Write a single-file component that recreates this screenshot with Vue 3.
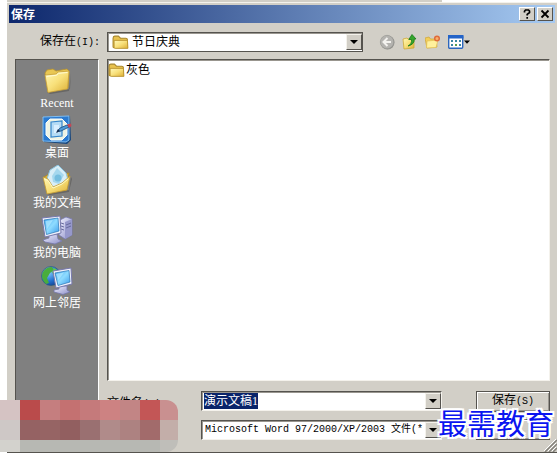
<script setup>
import { onMounted, ref } from 'vue'

const places = [
  { id: 'recent', label: 'Recent' },
  { id: 'desktop', label: '桌面' },
  { id: 'documents', label: '我的文档' },
  { id: 'computer', label: '我的电脑' },
  { id: 'network', label: '网上邻居' },
]
const files = ['灰色']
const fileName = ref('演示文稿1')
const nameInput = ref(null)

const mosaic = [
  ['#d5c3c3', '#ba4b4b', '#c57e7f', '#c47171', '#c57a7b', '#cd8282', '#c28585', '#c35656', '#c99090'],
  ['#cec8c6', '#956263', '#966464', '#925f60', '#9a7071', '#b08b8a', '#ad8281', '#a26b6b', '#c3aea9'],
  ['#d3d2cd', '#b7b8b3', '#b7b8b3', '#b7b8b3', '#b7b8b3', '#b7b8b3', '#b7b8b3', '#b7b8b3', '#bfbeb9'],
]

onMounted(() => {
  nameInput.value.focus()
  nameInput.value.select()
})
</script>

<template>
  <div class="page">
    <svg width="0" height="0" class="defs" aria-hidden="true">
      <defs>
        <linearGradient id="gold" x1="0" y1="0" x2="1" y2="1">
          <stop offset="0" stop-color="#fff8b8" />
          <stop offset="0.5" stop-color="#f8e07a" />
          <stop offset="1" stop-color="#dcae34" />
        </linearGradient>
        <linearGradient id="screen" x1="0" y1="0" x2="1" y2="1">
          <stop offset="0" stop-color="#3fa2f0" />
          <stop offset="0.5" stop-color="#8fdcff" />
          <stop offset="1" stop-color="#3a9bea" />
        </linearGradient>
        <linearGradient id="shell" x1="0" y1="0" x2="1" y2="1">
          <stop offset="0" stop-color="#f0f1ff" />
          <stop offset="1" stop-color="#8d8fc8" />
        </linearGradient>
        <radialGradient id="globe" cx="0.35" cy="0.3" r="0.8">
          <stop offset="0" stop-color="#8ed2ff" />
          <stop offset="0.6" stop-color="#2271cf" />
          <stop offset="1" stop-color="#123e8c" />
        </radialGradient>
        <symbol id="folder" viewBox="0 0 16 14">
          <path d="M1 3Q1 1 2.500 1H6L8 3H13Q14.500 3 14.500 4.500V12H2Q1 12 1 11Z" fill="#e8c24e" stroke="#a8862a" stroke-width="1" />
          <path d="M2 5H14.500L15 12.500H3Q2 12.500 2 11.500Z" fill="url(#gold)" stroke="#b8922e" stroke-width=".8" />
        </symbol>
      </defs>
    </svg>

    <div class="backdrop"><span></span></div>

    <main class="dialog">
      <header class="titlebar">
        <h1>保存</h1>
        <button type="button" class="caption" aria-label="帮助">
          <svg width="10" height="10" viewBox="0 0 10 10"><path d="M2.500 3.500V2.200L3.500 1H6.500L7.500 2V3.500L5.200 5.300V6.500M5.200 8V9.800" fill="none" stroke="#000" stroke-width="1.700" /></svg>
        </button>
        <button type="button" class="caption" aria-label="关闭">
          <svg width="10" height="10" viewBox="0 0 10 10"><path d="M1.500 1.500L8.500 8.500M8.500 1.500L1.500 8.500" stroke="#000" stroke-width="1.800" /></svg>
        </button>
      </header>

      <div class="lookin">
        <label for="location">保存在<span class="mono">(I):</span></label>
        <div class="combo location">
          <svg class="lead" width="17" height="15"><use href="#folder" /></svg>
          <select id="location"><option>节日庆典</option></select>
          <span class="arrow" aria-hidden="true"></span>
        </div>
        <nav class="tools" aria-label="工具">
          <button type="button" aria-label="后退">
            <svg width="16" height="16" viewBox="0 0 16 16">
              <circle cx="8.500" cy="8.500" r="7" fill="#8f8f8b" />
              <circle cx="8" cy="8" r="6.700" fill="#b4b3af" stroke="#999994" stroke-width=".6" />
              <path d="M8.500 4L4.500 8L8.500 12M5 8H12" fill="none" stroke="#f3f2ee" stroke-width="2" />
            </svg>
          </button>
          <button type="button" aria-label="向上一级">
            <svg width="16" height="16" viewBox="0 0 16 16">
              <path d="M1 5L5 4L6 5L12 4V14L2 15Z" fill="url(#gold)" stroke="#cda83a" stroke-width=".8" />
              <path d="M6 12Q10 10 9.500 5.500H6.800L10 .5L14 5H12.300Q12.500 10.500 6 12Z" fill="#35a72d" stroke="#167b1b" stroke-width=".8" />
            </svg>
          </button>
          <button type="button" aria-label="新建文件夹">
            <svg width="16" height="16" viewBox="0 0 16 16">
              <path d="M0 4L4 3L5.500 5H11L12 13L2 14Z" fill="#f3ce58" stroke="#d0a83c" stroke-width=".8" />
              <path d="M2 7L13 6L11 13.500L1.500 14Z" fill="#fff09c" stroke="#e0bd55" stroke-width=".7" />
              <circle cx="12" cy="4.500" r="2.300" fill="#f8b06c" stroke="#df6b3b" stroke-width="1.500" />
            </svg>
          </button>
          <button type="button" aria-label="视图">
            <svg width="24" height="16" viewBox="0 0 24 16">
              <rect x=".7" y="1.700" width="14" height="12.600" rx="1" fill="#fff" stroke="#2b66bd" stroke-width="1.400" />
              <rect x="0" y="1" width="15.500" height="3.500" fill="#2464c8" />
              <g fill="#3b86a3"><path d="M3 6h2v2H3zM7 6h2v2H7zM11 6h2v2h-2zM3 10h2v2H3zM11 10h2v2h-2z" /><path d="M7 10h2v2H7z" fill="#5c9d4b" /></g>
              <path d="M16 6.500H22L19 9.800Z" fill="#000" />
            </svg>
          </button>
        </nav>
      </div>

      <div class="body">
        <nav class="places" aria-label="位置">
          <button v-for="place in places" :key="place.id" type="button" class="place">
            <svg v-if="place.id === 'recent'" width="30" height="30" viewBox="0 0 30 30">
              <path d="M5 27L28 24L29 8L27 26L8 29Z" fill="#4f4e49" opacity=".5" />
              <path d="M3 8L5 5L11 4L14 6L25 4L27 6L26 23L6 27Z" fill="#e9c753" stroke="#b9932d" stroke-width=".8" />
              <path d="M3 10L14 9L16 7L27 6L25.500 24L6 27.500Z" fill="url(#gold)" stroke="#c7a03a" stroke-width=".8" />
              <path d="M4.500 11.500L14.500 10.200L16.500 8.300L25.500 7.500" fill="none" stroke="#fffbd6" />
            </svg>
            <svg v-else-if="place.id === 'desktop'" width="30" height="30" viewBox="0 0 30 30">
              <path d="M3 2L28 1L29 25L25 29L2 27Z" fill="#17467d" />
              <path d="M1 2L27 1L27 25L24 27L1 26Z" fill="#2b7ad0" stroke="#80bdf0" />
              <path d="M8 4H20L25 9V20L20 25H9L4 20V8Z" fill="#eef3e4" stroke="#f7fdfb" />
              <path d="M9 7L20 6V21L9 22Z" fill="#b5dcf5" stroke="#3486cc" stroke-width="1.200" />
              <path d="M12 10H17V18H12Z" fill="#d9efff" />
              <path d="M15 17L18 13L25 10L27 12L19 16Z" fill="#4c9ad8" stroke="#164a7d" stroke-width=".8" />
              <path d="M14 18L18 16L16 14Z" fill="#122b4c" />
              <path d="M25 9.500L29 8.500L29.500 11L27 13Z" fill="#c54755" />
            </svg>
            <svg v-else-if="place.id === 'documents'" width="30" height="30" viewBox="0 0 30 30">
              <path d="M5 29L27 25L29 12L30 14L27 27L8 30Z" fill="#4f4e49" opacity=".5" />
              <path d="M2 12L7 9L13 11L27 8L24 25L5 27Z" fill="#d9ae38" stroke="#b28b2b" />
              <path d="M5 14L8 5L16 0L24 8L26 15L16 23L7 21Z" fill="#d8eef7" stroke="#8cc4df" />
              <path d="M10 11L15 3L22 10L17 19L11 17Z" fill="#a5d8ee" />
              <circle cx="16" cy="13" r="3.500" fill="#75bedf" />
              <path d="M1 12L6 14L11 22L20 18L28 11L25 25L5 29Z" fill="url(#gold)" stroke="#c49b31" stroke-width=".8" />
              <path d="M2.500 14L6 15.500L11 23L20 19L26 14" fill="none" stroke="#fffac9" />
            </svg>
            <svg v-else-if="place.id === 'computer'" width="32" height="30" viewBox="0 0 32 30">
              <path d="M19 5L25 2L31 4V20L24 24L18 20Z" fill="url(#shell)" stroke="#7779b3" stroke-width=".8" />
              <path d="M24 7L31 4V20L24 24Z" fill="#9698cb" />
              <path d="M20 8L23 9M20 11L23 12M20 14L23 15M25 10L30 8M25 13L30 11" stroke="#676a9e" />
              <path d="M8 19H16L17 24L21 26L14 29L4 27L2 25L8 23Z" fill="url(#shell)" stroke="#777aae" stroke-width=".8" />
              <path d="M1 3L19 1L20 18L4 22Z" fill="#f0f1fb" stroke="#7779ad" />
              <path d="M3 5L17 3L18 16L5.500 19.500Z" fill="url(#screen)" stroke="#2776b5" stroke-width=".7" />
              <path d="M4.500 6L12 5L6 14Z" fill="#b2eaff" opacity=".7" />
            </svg>
            <svg v-else width="32" height="30" viewBox="0 0 32 30">
              <circle cx="10" cy="11" r="9.500" fill="url(#globe)" stroke="#25557b" stroke-width=".6" />
              <path d="M2 7Q5 2 11 2L13 5L9 8L6 13L8 18L5 19Q-1 13 2 7Z" fill="#49ad3d" />
              <path d="M13 3L18 6L19 13L13 11L11 7Z" fill="#62c84c" />
              <path d="M18 21H26L26 25L29 27L22 29.500L13 27L13 25L18 24Z" fill="url(#shell)" stroke="#7476a9" stroke-width=".8" />
              <path d="M12 6L30 3L31 19L15 23Z" fill="#eff0fb" stroke="#7779ad" />
              <path d="M14 8L28 5.500L29 17L17 20.500Z" fill="url(#screen)" stroke="#2776b5" stroke-width=".7" />
              <path d="M15 9L23 7.500L17.500 15Z" fill="#b2eaff" opacity=".7" />
            </svg>
            <span>{{ place.label }}</span>
          </button>
        </nav>

        <section class="content">
          <ul class="files" aria-label="文件">
            <li v-for="file in files" :key="file">
              <svg width="17" height="15"><use href="#folder" /></svg>{{ file }}
            </li>
          </ul>
          <form class="fields" @submit.prevent>
            <label for="filename">文件名<span class="mono">(N):</span></label>
            <div class="combo">
              <input id="filename" ref="nameInput" v-model="fileName" type="text" autocomplete="off" spellcheck="false" />
              <span class="arrow" aria-hidden="true"></span>
            </div>
            <button type="submit" class="push">保存<span class="mono">(S)</span></button>
            <div class="combo type">
              <select aria-label="保存类型"><option>Microsoft Word 97/2000/XP/2003 文件(*</option></select>
              <span class="arrow" aria-hidden="true"></span>
            </div>
            <button type="button" class="push" aria-label="取消"></button>
          </form>
        </section>
      </div>
      <svg class="grip" width="13" height="13" viewBox="0 0 13 13" aria-hidden="true">
        <path d="M1 13L13 1M5 13L13 5M9 13L13 9" stroke="#85827b" stroke-width="1.500" />
        <path d="M0 12L12 0M4 12L12 4M8 12L12 8" stroke="#fff" stroke-width="1" />
      </svg>
    </main>

    <div class="mosaic" aria-hidden="true">
      <template v-for="(row, r) in mosaic" :key="r">
        <i v-for="(color, c) in row" :key="c" :style="{ background: color }"></i>
      </template>
    </div>
    <div class="watermark">最需教育</div>
  </div>
</template>

<style>
body {
  margin: 0;
  background: #fff;
}
</style>

<style scoped>
* {
  box-sizing: border-box;
}
.page {
  position: relative;
  display: flex;
  flex-direction: column;
  min-height: 100vh;
  padding: 0 3px 1px 7px;
  font: 12px/16px "Liberation Serif", "Noto Sans CJK SC", sans-serif;
  color: #000;
}
.defs {
  position: absolute;
}
.backdrop {
  display: flex;
  justify-content: flex-end;
  height: 2px;
  background: #d2cfc7;
}
.backdrop span {
  width: 21%;
  background: #fff;
}
button,
select,
input {
  margin: 0;
  padding: 0;
  border: 0;
  border-radius: 0;
  outline: 0;
  background: none;
  color: inherit;
  font: inherit;
  appearance: none;
}
svg {
  display: block;
  flex: none;
}
.mono {
  font-family: "Liberation Mono", monospace;
  font-size: 10px;
}
.dialog {
  position: relative;
  flex: 1;
  display: flex;
  flex-direction: column;
  padding: 2px 2px 0;
  background: #d2cfc7;
  border-top: 1px solid #f4f2ec;
  border-bottom: 1px solid #55534e;
}
.titlebar {
  display: flex;
  align-items: center;
  height: 18px;
  gap: 2px;
  padding: 0 2px;
  background: linear-gradient(90deg, #0d276c, #a6caf2);
}
h1 {
  flex: 1;
  margin: 0;
  font: bold 12px/16px "Noto Sans CJK SC", sans-serif;
  color: #fff;
}
.caption {
  display: grid;
  place-items: center;
  width: 16px;
  height: 14px;
  background: #d2cfc7;
  border: 1px solid;
  border-color: #fff #55534e #55534e #fff;
}
.lookin {
  display: flex;
  align-items: center;
  height: 36px;
  padding: 2px 0 0 31px;
}
.lookin label {
  width: 67px;
}
.combo {
  display: flex;
  align-items: center;
  height: 20px;
  min-width: 0;
  background: #fff;
  border: 1px solid;
  border-color: #55534e #f4f2ec #f4f2ec #55534e;
  box-shadow: inset 1px 1px #99968f;
}
.location {
  flex: 0 1 256px;
  border-color: #55534e;
}
.lead {
  margin-left: 4px;
}
.combo select,
.combo input {
  flex: 1;
  min-width: 0;
  height: 16px;
  padding-left: 3px;
  line-height: 16px;
}
.combo input {
  padding-left: 2px;
}
.type {
  grid-column: 2;
  font: 10px/16px "Liberation Mono", "Noto Sans CJK SC", monospace;
}
input::selection {
  background: #0a246a;
  color: #fff;
}
.arrow {
  display: grid;
  place-items: center;
  flex: none;
  width: 16px;
  height: 16px;
  background: #d2cfc7;
  border: 1px solid;
  border-color: #f4f2ec #55534e #55534e #f4f2ec;
  pointer-events: none;
}
.arrow::after {
  content: "";
  border: 4px solid transparent;
  border-top-color: #000;
  border-bottom: 0;
}
.tools {
  display: flex;
  gap: 7px;
  margin-left: 16px;
}
.body {
  flex: 1;
  display: grid;
  grid-template-columns: 84px minmax(0, 1fr);
  gap: 8px;
  padding: 0 5px 12px 6px;
}
.places {
  display: flex;
  flex-direction: column;
  align-items: center;
  gap: 4px;
  padding-top: 5px;
  background: #808080;
  border: 1px solid;
  border-color: #55534e #fff #fff #55534e;
}
.place {
  display: flex;
  flex-direction: column;
  align-items: center;
  color: #fff;
}
.place span {
  height: 16px;
  line-height: 16px;
}
.content {
  display: flex;
  flex-direction: column;
  gap: 9px;
  min-width: 0;
}
.files {
  flex: 1;
  margin: 0;
  padding: 2px 0;
  list-style: none;
  background: #fff;
  border: 1px solid;
  border-color: #55534e #f4f2ec #f4f2ec #55534e;
  box-shadow: inset 1px 1px #99968f;
}
.files li {
  display: flex;
  align-items: center;
  gap: 1px;
}
.fields {
  display: grid;
  grid-template-columns: 94px minmax(0, 1fr) 74px;
  row-gap: 7px;
  align-items: center;
}
.fields label {
  padding-top: 6px;
  line-height: 14px;
}
.fields .combo {
  margin-right: 34px;
}
.push {
  height: 21px;
  background: #d2cfc7;
  border: 1px solid #55534e;
  box-shadow: inset 1px 1px #fff, inset -1px -1px #99968f;
}
.grip {
  position: absolute;
  right: 0;
  bottom: 0;
}
.mosaic {
  position: absolute;
  left: 0;
  bottom: 2px;
  display: grid;
  grid-template-columns: repeat(8, 20px) 18px;
  grid-template-rows: 20px 20px 12px;
  border-radius: 0 12px 12px 0;
  overflow: hidden;
}
.watermark {
  position: absolute;
  right: 6px;
  bottom: 17px;
  font: 29px/29px "Noto Sans CJK SC", sans-serif;
  color: #0a14f0;
  text-shadow: 2px 0 #fff, -2px 0 #fff, 0 2px #fff, 0 -2px #fff, 2px 2px #fff, -2px 2px #fff, 2px -2px #fff, -2px -2px #fff;
  pointer-events: none;
}
</style>
